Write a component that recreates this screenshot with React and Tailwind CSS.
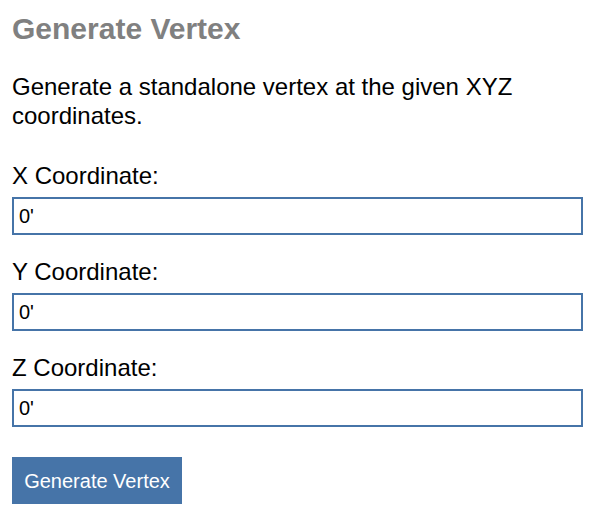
import React from "react";

export default function App() {
  const fields = ["X Coordinate:", "Y Coordinate:", "Z Coordinate:"];
  return (
    <div className="bg-white min-h-[526px] px-3 pt-[11px] text-black" style={{ fontFamily: '"Liberation Sans", Arial, sans-serif' }}>
      <h2 className="text-[30px] font-bold text-[#808080] leading-[36px]">Generate Vertex</h2>
      <p className="text-[24px] leading-[29px] mt-[25px]">
        Generate a standalone vertex at the given XYZ coordinates.
      </p>
      <div className="mt-[31px] flex flex-col gap-[22px]">
        {fields.map((f) => (
          <div key={f} className="flex flex-col">
            <label className="text-[24px] leading-[29px]">{f}</label>
            <input
              defaultValue="0'"
              className="mt-[7px] h-[38px] w-full border-2 border-[#4674a8] px-[5px] text-[20px] outline-none"
            />
          </div>
        ))}
      </div>
      <button className="mt-[30px] h-[47px] w-[170px] bg-[#4674a8] text-white text-[20px]">
        Generate Vertex
      </button>
    </div>
  );
}
